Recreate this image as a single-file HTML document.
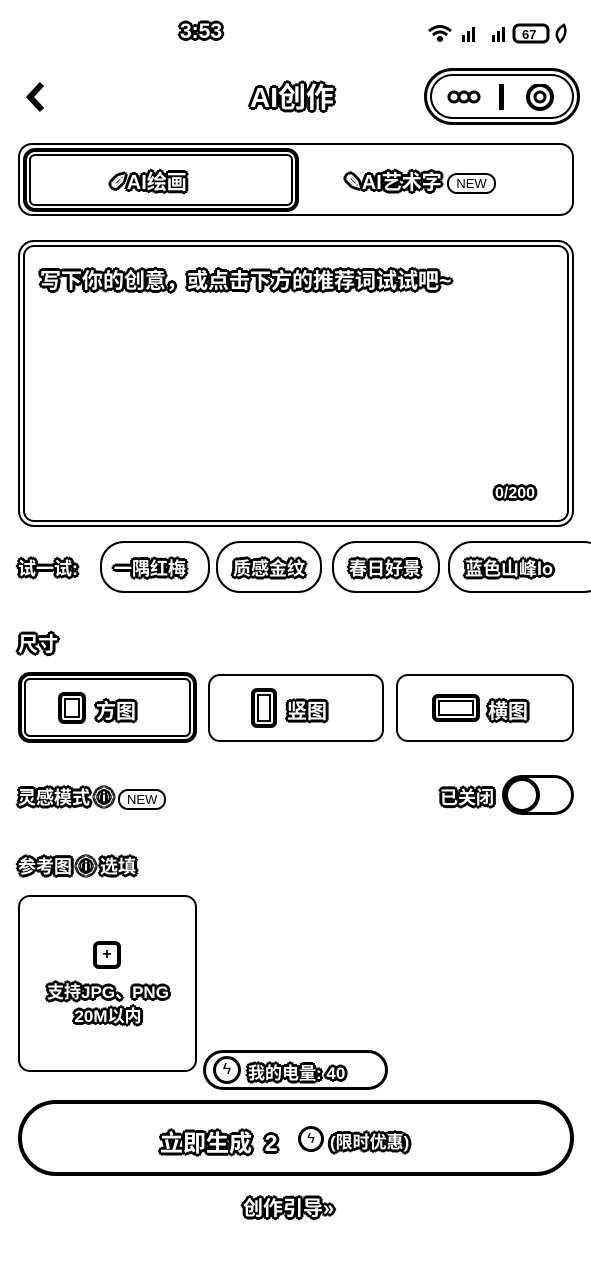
<!DOCTYPE html>
<html><head><meta charset="utf-8"><style>
*{margin:0;padding:0;box-sizing:border-box}
body{width:591px;height:1280px;background:#fff;position:relative;overflow:hidden;font-family:"Liberation Sans","Noto Sans CJK SC",sans-serif;}
.a{position:absolute}
.t{color:#fff;font-weight:bold;text-shadow:-2px 0 #000,2px 0 #000,0 -2px #000,0 2px #000,-2px -2px #000,2px 2px #000,-2px 2px #000,2px -2px #000,-3px 0 #000,3px 0 #000,0 3px #000,0 -3px #000;white-space:nowrap}
.box{position:absolute;border:2px solid #000;background:#fff}
.new{display:inline-block;border:2px solid #000;border-radius:10px;font-size:13px;padding:1px 7px;color:#000;font-weight:normal;text-shadow:none;vertical-align:middle;background:#fff}
</style></head><body>
<div class="a t" style="left:180px;top:20px;font-size:21px">3:53</div>
<div class="a" style="left:426px;top:22px;width:150px;height:22px;font-size:12px;font-weight:bold;white-space:nowrap">
<svg width="150" height="22"><path d="M3 9 Q14 0 25 9" stroke="#000" stroke-width="3" fill="none"/><path d="M7 13 Q14 7 21 13" stroke="#000" stroke-width="3" fill="none"/><circle cx="14" cy="17" r="3"/>
<rect x="36" y="13" width="3" height="7"/><rect x="41" y="9" width="3" height="11"/><rect x="46" y="5" width="3" height="15"/>
<rect x="66" y="13" width="3" height="7"/><rect x="71" y="9" width="3" height="11"/><rect x="76" y="5" width="3" height="15"/>
<rect x="88" y="3" width="34" height="17" rx="5" fill="none" stroke="#000" stroke-width="3"/><text x="96" y="17" font-size="13" font-weight="bold" font-family="Liberation Sans">67</text>
<path d="M134 20 Q126 10 138 3 Q142 12 134 20Z" fill="none" stroke="#000" stroke-width="2.5"/></svg></div>
<svg class="a" style="left:22px;top:80px" width="26" height="34"><path d="M20 4 L8 17 L20 30" stroke="#000" stroke-width="6" fill="none"/></svg>
<div class="a t" style="left:250px;top:76px;font-size:28px">AI创作</div>
<div class="a" style="left:424px;top:68px;width:156px;height:57px;border:3px solid #000;border-radius:29px;box-shadow:inset 0 0 0 3px #fff,inset 0 0 0 5px #000"></div>
<svg class="a" style="left:444px;top:84px" width="120" height="28"><circle cx="10" cy="13" r="5" stroke="#000" stroke-width="3" fill="#fff"/><circle cx="20" cy="13" r="5" stroke="#000" stroke-width="3" fill="#fff"/><circle cx="30" cy="13" r="5" stroke="#000" stroke-width="3" fill="#fff"/><rect x="55" y="0" width="5" height="26" fill="#000"/><circle cx="96" cy="13" r="12" stroke="#000" stroke-width="4" fill="#fff"/><circle cx="96" cy="13" r="5" stroke="#000" stroke-width="3" fill="#fff"/></svg>
<div class="box" style="left:18px;top:143px;width:556px;height:73px;border-radius:14px"></div>
<div class="box" style="left:23px;top:148px;width:276px;height:64px;border:4px solid #000;border-radius:12px;box-shadow:inset 0 0 0 2px #fff,inset 0 0 0 4px #000"></div>
<div class="a t" style="left:110px;top:166px;font-size:20px">✐AI绘画</div>
<div class="a t" style="left:345px;top:166px;font-size:20px">✎AI艺术字 <span class="new">NEW</span></div>
<div class="box" style="left:18px;top:240px;width:556px;height:287px;border-radius:16px;box-shadow:inset 0 0 0 3px #fff,inset 0 0 0 5px #000"></div>
<div class="a t" style="left:40px;top:265px;font-size:21px">写下你的创意，或点击下方的推荐词试试吧~</div>
<div class="a t" style="left:495px;top:485px;font-size:16px">0/200</div>
<div class="a t" style="left:18px;top:555px;font-size:18px">试一试:</div>
<div class="box" style="left:100px;top:541px;width:110px;height:52px;border-radius:24px"></div>
<div class="a t" style="left:114px;top:555px;font-size:18px">一隅红梅</div>
<div class="box" style="left:216px;top:541px;width:106px;height:52px;border-radius:24px"></div>
<div class="a t" style="left:233px;top:555px;font-size:18px">质感金纹</div>
<div class="box" style="left:332px;top:541px;width:108px;height:52px;border-radius:24px"></div>
<div class="a t" style="left:349px;top:555px;font-size:18px">春日好景</div>
<div class="box" style="left:448px;top:541px;width:160px;height:52px;border-radius:24px"></div>
<div class="a t" style="left:465px;top:555px;font-size:18px">蓝色山峰lo</div>
<div class="a t" style="left:18px;top:628px;font-size:20px">尺寸</div>
<div class="box" style="left:18px;top:672px;width:179px;height:71px;border:4px solid #000;border-radius:12px;box-shadow:inset 0 0 0 2px #fff,inset 0 0 0 4px #000"></div>
<div class="a" style="left:58px;top:692px;width:28px;height:32px;border:4px solid #000;border-radius:6px;box-shadow:inset 0 0 0 2px #fff,inset 0 0 0 4px #000"></div>
<div class="a t" style="left:96px;top:695px;font-size:20px">方图</div>
<div class="box" style="left:208px;top:674px;width:176px;height:68px;border-radius:12px"></div>
<div class="a" style="left:251px;top:688px;width:26px;height:40px;border:4px solid #000;border-radius:6px;box-shadow:inset 0 0 0 2px #fff,inset 0 0 0 4px #000"></div>
<div class="a t" style="left:287px;top:695px;font-size:20px">竖图</div>
<div class="box" style="left:396px;top:674px;width:178px;height:68px;border-radius:12px"></div>
<div class="a" style="left:432px;top:694px;width:48px;height:28px;border:4px solid #000;border-radius:6px;box-shadow:inset 0 0 0 2px #fff,inset 0 0 0 4px #000"></div>
<div class="a t" style="left:488px;top:695px;font-size:20px">横图</div>
<div class="a t" style="left:18px;top:784px;font-size:18px">灵感模式 ⓘ <span class="new">NEW</span></div>
<div class="a t" style="left:440px;top:784px;font-size:18px">已关闭</div>
<div class="a" style="left:502px;top:775px;width:72px;height:40px;border:3px solid #000;border-radius:20px"></div>
<div class="a" style="left:504px;top:777px;width:36px;height:36px;border:4px solid #000;border-radius:50%"></div>
<div class="a t" style="left:18px;top:853px;font-size:18px">参考图 ⓘ 选填</div>
<div class="box" style="left:18px;top:895px;width:179px;height:177px;border-radius:12px"></div>
<div class="a" style="left:93px;top:941px;width:28px;height:28px;border:4px solid #000;border-radius:6px;text-align:center;font-weight:bold;line-height:20px">+</div>
<div class="a t" style="left:38px;top:981px;width:140px;text-align:center;font-size:17px;line-height:24px">支持JPG、PNG<br>20M以内</div>
<div class="a" style="left:203px;top:1050px;width:185px;height:40px;border:3px solid #000;border-radius:20px;background:#fff"></div>
<div class="a" style="left:213px;top:1056px;width:28px;height:28px;border:3px solid #000;border-radius:50%;text-align:center;font-size:16px;line-height:22px">ϟ</div>
<div class="a t" style="left:248px;top:1059px;font-size:17px">我的电量: 40</div>
<div class="a" style="left:18px;top:1100px;width:556px;height:76px;border:4px solid #000;border-radius:38px"></div>
<div class="a t" style="left:160px;top:1124px;font-size:23px">立即生成&nbsp;&nbsp;2</div>
<div class="a" style="left:298px;top:1126px;width:26px;height:26px;border:3px solid #000;border-radius:50%;text-align:center;font-size:15px;line-height:20px">ϟ</div>
<div class="a t" style="left:330px;top:1128px;font-size:17px">(限时优惠)</div>
<div class="a t" style="left:243px;top:1192px;font-size:20px">创作引导»</div>
</body></html>
